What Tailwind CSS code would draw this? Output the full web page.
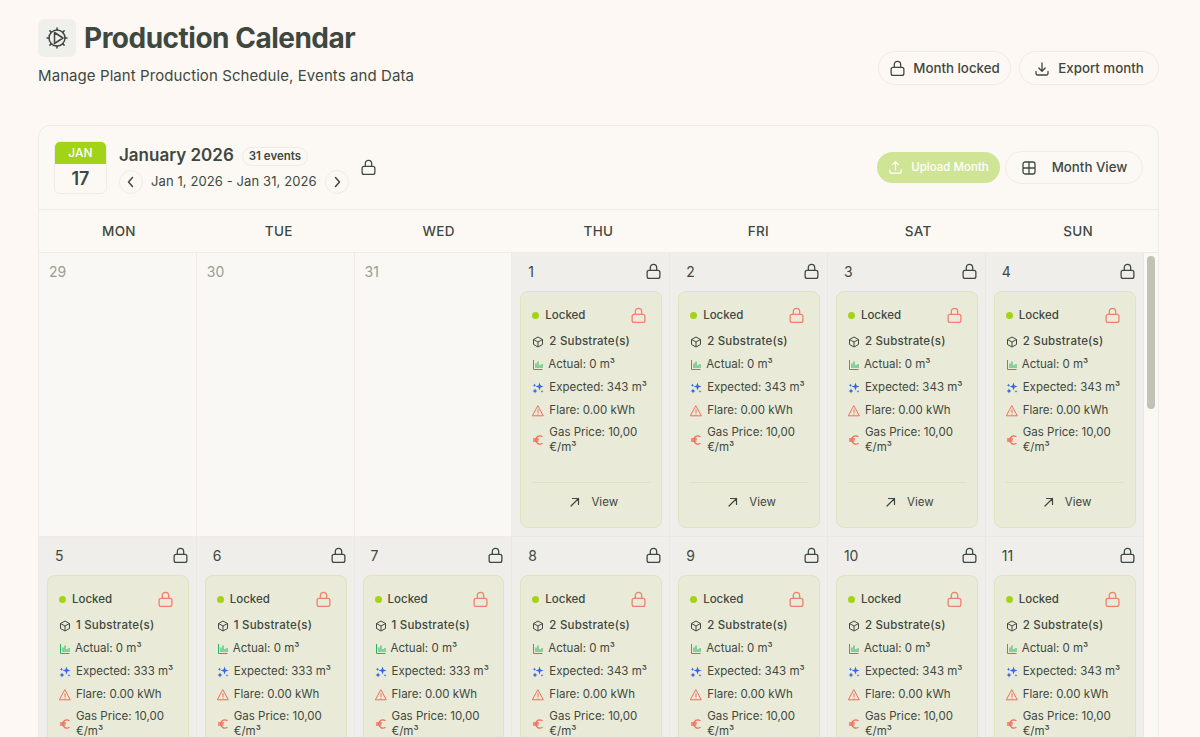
<!DOCTYPE html>
<html lang="en">
<head>
  <meta charset="UTF-8">
  <title>Production Calendar</title>
  <script src="https://cdn.jsdelivr.net/npm/@tailwindcss/browser@4"></script>
</head>
<body class="h-screen overflow-hidden bg-[#fdf8f4] text-[#3f4840] font-['Inter',sans-serif]">
  <!-- page header -->
  <header class="flex justify-between px-[38px] pt-[19px] h-[125px]">
    <div>
      <div class="flex items-center gap-[8px]">
        <div class="w-[38px] h-[38px] rounded-[6px] bg-[#eff0ec] flex items-center justify-center">
          <svg class="w-[24px] h-[24px]" viewBox="0 0 24 24" fill="none" stroke="#3f4840" stroke-width="1.500" stroke-linecap="round" stroke-linejoin="round"><circle cx="12" cy="12" r="8"/><path d="M12 2v2M12 20v2M2 12h2M20 12h2M4.900 4.900l1.500 1.500M17.600 17.600l1.500 1.500M4.900 19.100l1.500-1.500M17.600 6.400l1.500-1.500"/><path d="M9.500 6.500v11M9.500 6.500L18 12l-8.500 5.500"/></svg>
        </div>
        <h1 class="text-[28px] leading-[38px] font-bold tracking-[-0.5px]">Production Calendar</h1>
      </div>
      <p class="mt-[9px] text-[15px] leading-[20px] tracking-[0.08px]">Manage Plant Production Schedule, Events and Data</p>
    </div>
    <div class="flex gap-[8px] mt-[32px] mr-[3px]">
      <button class="h-[34px] w-[133px] pt-[1px] rounded-full border border-[#efece7] flex items-center justify-center gap-[7px] text-[13.300px] font-medium">
        <svg class="w-[17px] h-[17px]" viewBox="0 0 16 16" fill="none" stroke="#3f4840" stroke-width="1.200"><rect x="2" y="7" width="12" height="7.500" rx="1.800"/><path d="M5 7V4.300a3 3 0 0 1 6 0V7"/></svg>
        Month locked
      </button>
      <button class="h-[34px] w-[140px] pt-[1px] rounded-full border border-[#efece7] flex items-center justify-center gap-[8px] text-[13.300px] font-medium">
        <svg class="w-[16px] h-[16px]" viewBox="0 0 16 16" fill="none" stroke="#3f4840" stroke-width="1.300" stroke-linecap="round" stroke-linejoin="round"><path d="M8 2v8M4.800 7L8 10.200 11.200 7M2 10.500v2a1.500 1.500 0 0 0 1.500 1.500h9a1.500 1.500 0 0 0 1.500-1.500v-2"/></svg>
        Export month
      </button>
    </div>
  </header>

  <main class="relative mx-[38px] w-[1121px] rounded-t-[12px] border border-[#efece7] bg-[#fcf9f5]">
    <!-- calendar toolbar -->
    <div class="h-[84px] flex justify-between px-[15px] pt-[15px] border-b border-[#efece7]">
      <div class="flex">
        <div class="w-[53px] h-[53px] rounded-[6px] border border-[#efece7] overflow-hidden text-center">
          <div class="h-[22px] bg-[#a2d316] text-white text-[12px] leading-[22px] font-medium">JAN</div>
          <div class="text-[18px] leading-[29px] font-semibold">17</div>
        </div>
        <div class="ml-[12px] mt-[1px]">
          <div class="flex items-center h-[28px]">
            <span class="text-[17px] font-semibold">January 2026</span>
            <span class="ml-[8px] h-[19px] px-[6px] rounded-full border border-[#efece7] text-[11.500px] leading-[17px] font-semibold">31 events</span>
          </div>
          <div class="flex items-center h-[24px]">
            <span class="w-[24px] h-[24px] rounded-full border border-[#efece7] flex items-center justify-center">
              <svg class="w-[14px] h-[14px]" viewBox="0 0 14 14" fill="none" stroke="#3f4840" stroke-width="1.500" stroke-linecap="round" stroke-linejoin="round"><path d="M8.500 2.500L4.500 7l4 4.500"/></svg>
            </span>
            <span class="mx-[8px] text-[13px] tracking-[0.1px]">Jan 1, 2026 - Jan 31, 2026</span>
            <span class="w-[24px] h-[24px] rounded-full border border-[#efece7] flex items-center justify-center">
              <svg class="w-[14px] h-[14px]" viewBox="0 0 14 14" fill="none" stroke="#3f4840" stroke-width="1.500" stroke-linecap="round" stroke-linejoin="round"><path d="M5.500 2.500l4 4.500-4 4.500"/></svg>
            </span>
          </div>
        </div>
        <svg class="ml-[11px] mt-[18px] w-[17px] h-[17px]" viewBox="0 0 16 16" fill="none" stroke="#3f4840" stroke-width="1.200"><rect x="2" y="7" width="12" height="7.500" rx="1.800"/><path d="M5 7V4.300a3 3 0 0 1 6 0V7"/></svg>
      </div>
      <div class="flex gap-[5px] items-center h-[33px] mt-[10px]">
        <button class="h-[31px] w-[123px] rounded-full bg-[#d0e496] text-white text-[11.500px] font-medium flex items-center justify-center gap-[8px]">
          <svg class="w-[15px] h-[15px]" viewBox="0 0 16 16" fill="none" stroke="#fff" stroke-width="1.300" stroke-linecap="round" stroke-linejoin="round"><path d="M8 10.500V2M4.800 5L8 1.800 11.200 5M2 10.500v2a1.500 1.500 0 0 0 1.500 1.500h9a1.500 1.500 0 0 0 1.500-1.500v-2"/></svg>
          Upload Month
        </button>
        <button class="h-[33px] w-[138px] rounded-full border border-[#efece7] flex items-center justify-center gap-[15px] text-[13.300px] font-medium">
          <svg class="w-[16px] h-[16px]" viewBox="0 0 16 16" fill="none" stroke="#3f4840" stroke-width="1.300"><rect x="2" y="2" width="12" height="12" rx="2"/><path d="M8 2v12M2 8h12"/></svg>
          Month View
        </button>
      </div>
    </div>

    <!-- weekday row -->
    <div class="grid grid-cols-7 h-[43px] border-b border-[#efece7] text-[13.500px] leading-[42px] font-medium text-center tracking-[0.3px]">
      <div>MON</div><div>TUE</div><div>WED</div><div>THU</div><div>FRI</div><div>SAT</div><div>SUN</div>
    </div>

    <!-- day grid, filled in below -->
    <div id="days" class="grid grid-cols-7 w-[1104.500px]"></div>

    <!-- scrollbar -->
    <div class="absolute left-[1108px] top-[130px] w-[8px] h-[153px] rounded-full bg-[#c2c3b7]"></div>
  </main>

  <script>
    const lock = `<svg class="w-[17px] h-[17px]" viewBox="0 0 16 16" fill="none" stroke="#3f4840" stroke-width="1.200"><rect x="2" y="7" width="12" height="7.500" rx="1.800"/><path d="M5 7V4.300a3 3 0 0 1 6 0V7"/></svg>`;
    const redLock = `<svg class="w-[17px] h-[17px]" viewBox="0 0 16 16" fill="none" stroke="#f0806c" stroke-width="1.200"><rect x="2" y="7" width="12" height="7.500" rx="1.800"/><path d="M5 7V4.300a3 3 0 0 1 6 0V7"/></svg>`;
    const cube = `<svg class="w-[12px] h-[12px] shrink-0" viewBox="0 0 12 12" fill="none" stroke="#3f4840" stroke-width="1" stroke-linejoin="round"><path d="M6 1l4.500 2.500v5L6 11 1.500 8.500v-5zM1.500 3.500L6 6l4.500-2.500M6 6v5"/></svg>`;
    const bars = `<svg class="w-[12px] h-[12px] shrink-0" viewBox="0 0 12 12" fill="none" stroke="#22b45e" stroke-width="1"><path d="M1.500 1v9.500h9M4 9V4.500M6 9V2.500M8 9V6M10 9V5"/></svg>`;
    const spark = `<svg class="w-[12px] h-[12px] shrink-0" viewBox="0 0 12 12" fill="#2f68e6"><path d="M7.500 .5l1 3 3 1-3 1-1 3-1-3-3-1 3-1zM3 6.500l.8 1.700 1.700.8-1.700.8L3 11.500l-.8-1.700L.5 9l1.700-.8zM2.500 1.500l.5 1.200 1.200.5-1.200.5-.5 1.200-.5-1.200-1.200-.5 1.200-.5zM10 8l.4 1 1 .4-1 .4-.4 1-.4-1-1-.4 1-.4z"/></svg>`;
    const warn = `<svg class="w-[12px] h-[12px] shrink-0" viewBox="0 0 12 12" fill="none" stroke="#ee6f5c" stroke-width="1" stroke-linecap="round" stroke-linejoin="round"><path d="M6 1L11.300 10.800H.7zM6 4.700v3M6 9.200v.1"/></svg>`;
    const euro = `<svg class="w-[12px] h-[12px] shrink-0" viewBox="0 0 12 12" fill="none" stroke="#ee6f5c" stroke-width="1.300" stroke-linecap="round"><path d="M10 2.500a4 4 0 0 0-6.200 3.500 4 4 0 0 0 6.200 3.500M1.500 5h5M1.500 7h4.500"/></svg>`;
    const arrow = `<svg class="w-[12px] h-[12px]" viewBox="0 0 12 12" fill="none" stroke="#3f4840" stroke-width="1.200" stroke-linecap="round" stroke-linejoin="round"><path d="M2 10l7.500-7.500M3.500 2.500h6V8.500"/></svg>`;

    function dayCard(substrates, expected) {
      return `<div class="h-[237px] rounded-[8px] border border-[#dce5bc] bg-[#e9ebd8] px-[11px] text-[11.500px] leading-[15px] flex flex-col">
        <div class="flex items-center justify-between h-[20px] mt-[13px] pr-[3px]">
          <div class="flex items-center gap-[6px]"><span class="w-[7px] h-[7px] rounded-full bg-[#a2d316]"></span><span class="font-medium">Locked</span></div>
          ${redLock}
        </div>
        <div class="flex items-center gap-[5px] h-[15px] mt-[9px] font-medium tracking-[0.2px]">${cube}<span>${substrates} Substrate(s)</span></div>
        <div class="flex items-center gap-[4px] h-[15px] mt-[8px]">${bars}<span>Actual: 0 m³</span></div>
        <div class="flex items-center gap-[5px] h-[15px] mt-[8px]">${spark}<span class="whitespace-nowrap">Expected: ${expected} m³</span></div>
        <div class="flex items-center gap-[5px] h-[15px] mt-[8px]">${warn}<span>Flare: 0.00 kWh</span></div>
        <div class="flex items-center gap-[5px] mt-[7px]">${euro}<span>Gas Price: 10,00<br>€/m³</span></div>
        <div class="mt-[27px] border-t border-[#dce0c6] h-[39px] flex items-center justify-center gap-[10px] pl-[5px]">${arrow}<span>View</span></div>
      </div>`;
    }

    const cells = [];
    [29, 30, 31].forEach(n => {
      cells.push(`<div class="h-[284px] border-r border-b border-[#efece7] bg-[#f9f8f4] px-[10px] pt-[10px] text-[14px] leading-[17px] text-[#9a9d94]">${n}</div>`);
    });
    for (let d = 1; d <= 14; d++) {
      const single = d >= 5 && d <= 7;
      cells.push(`<div class="h-[284px] border-r border-b border-[#e9e8e3] bg-[#efeeea] pl-[8px] pr-[7px] pt-[10px]">
        <div class="flex justify-between items-center h-[17px] pl-[8px] mb-[11px] text-[14px]"><span>${d}</span>${lock}</div>
        ${dayCard(single ? 1 : 2, single ? 333 : 343)}
      </div>`);
    }
    document.getElementById('days').innerHTML = cells.join('');
  </script>
</body>
</html>
